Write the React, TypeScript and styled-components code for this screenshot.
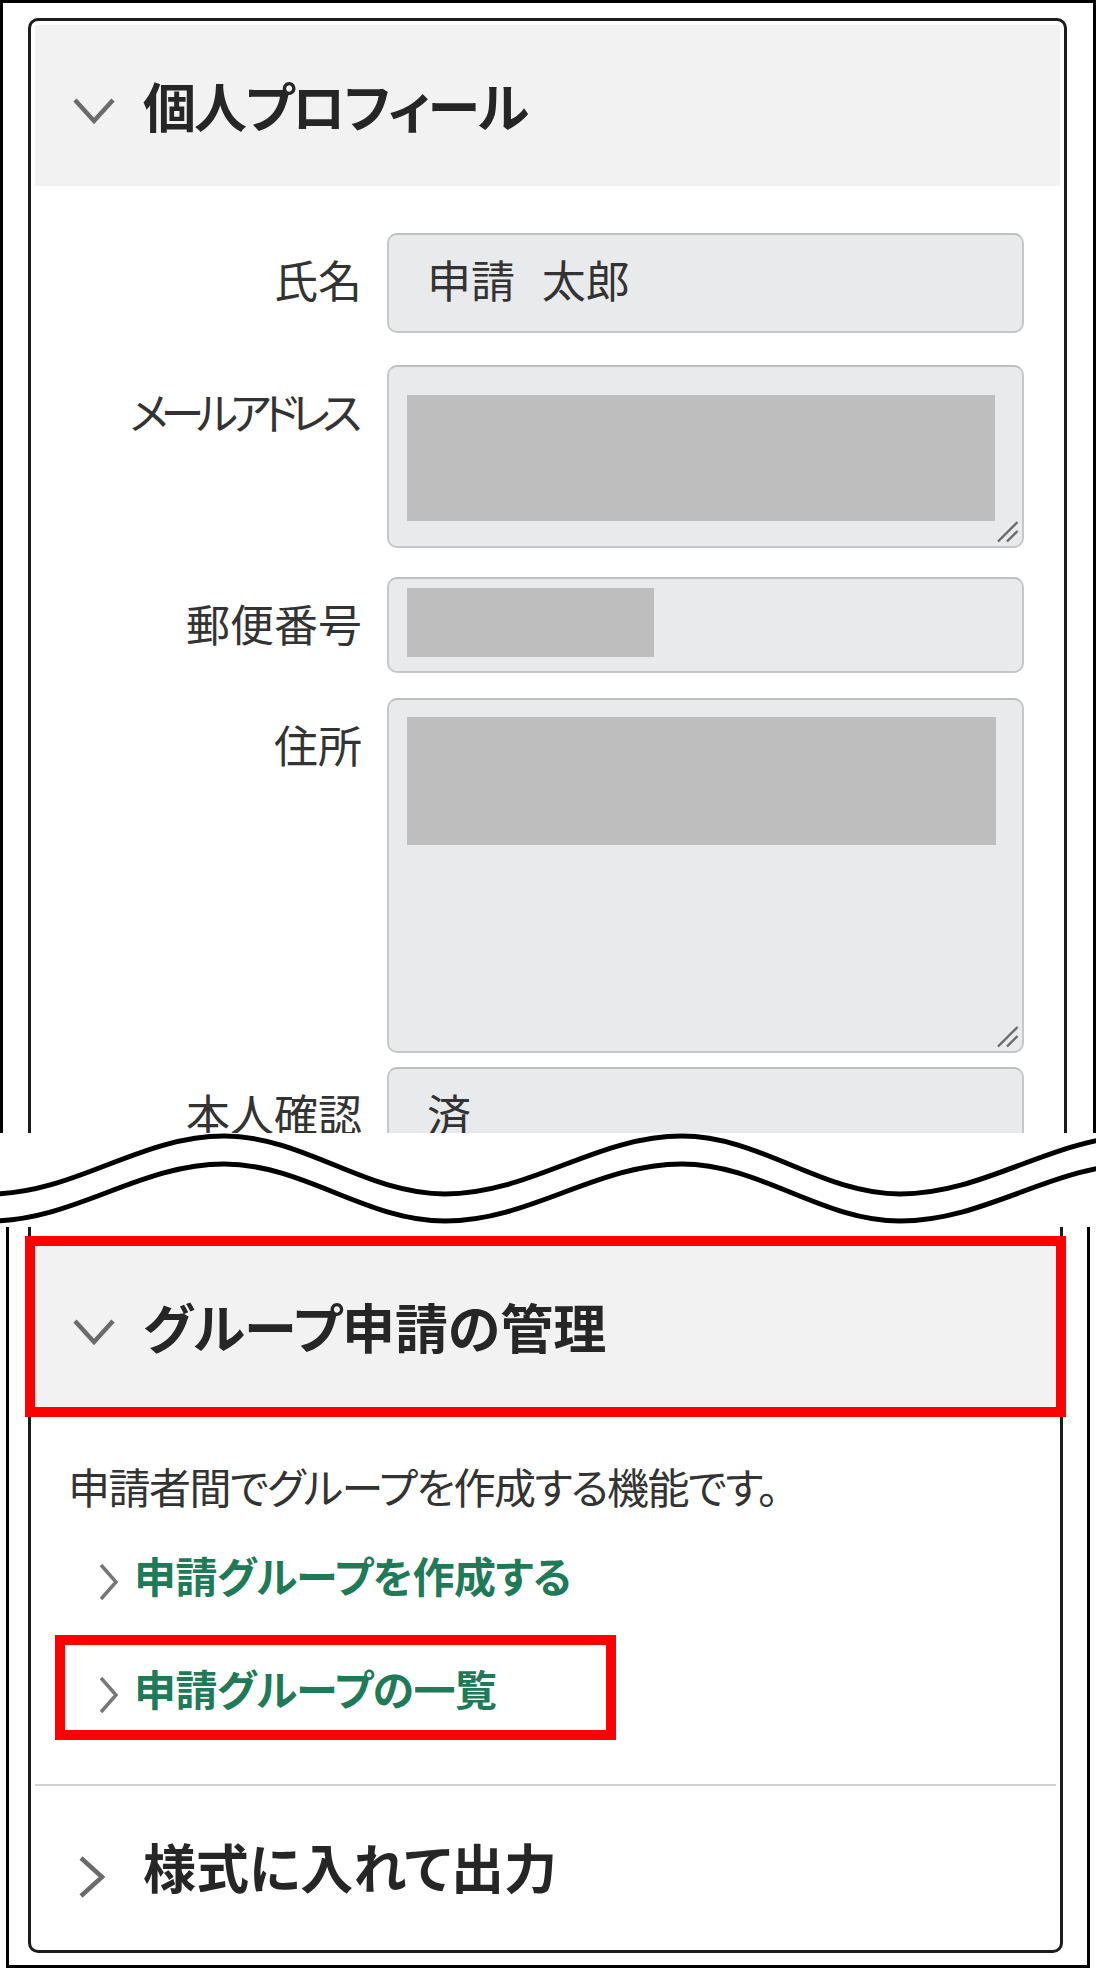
import React from 'react';
import styled, { createGlobalStyle } from 'styled-components';

const GlobalStyle = createGlobalStyle`
  html, body {
    margin: 0;
    padding: 0;
    background: #fff;
  }
  body {
    font-family: "Noto Sans CJK JP", "Noto Sans", sans-serif;
    color: #333;
  }
`;

type FieldDef = {
  label: string;
  tracking?: number;
  gap: number;
  height: number;
  value?: string;
  redact?: { w: number; h: number; top: number };
  grip?: boolean;
};

const fields: FieldDef[] = [
  { label: '氏名', gap: 0, height: 100, value: '申請 太郎' },
  { label: 'メールアドレス', tracking: -7.5, gap: 32, height: 183, redact: { w: 588, h: 126, top: 28 }, grip: true },
  { label: '郵便番号', gap: 29, height: 96, redact: { w: 247, h: 69, top: 9 } },
  { label: '住所', gap: 25, height: 355, redact: { w: 589, h: 128, top: 17 }, grip: true },
  { label: '本人確認', gap: 14, height: 100, value: '済' },
];

function Chevron({ dir }: { dir: 'down' | 'right' }) {
  if (dir === 'down') {
    return (
      <ChevronSvg viewBox="0 0 44 44" $shift={7}>
        <path d="M3 13 L22 34 L41 13" />
      </ChevronSvg>
    );
  }
  return (
    <ChevronSvg viewBox="0 0 44 44" $shift={22}>
      <path d="M9 3 L30 22 L9 41" />
    </ChevronSvg>
  );
}

function WaveBreak() {
  // two parallel wavy cut lines
  const wave = (peak: number, trough: number) => {
    const xs = [-10, 224, 445, 682, 900, 1140];
    let d = `M${xs[0]} ${trough}`;
    for (let i = 1; i < xs.length; i++) {
      const x0 = xs[i - 1];
      const x1 = xs[i];
      const y0 = i % 2 === 1 ? trough : peak;
      const y1 = i % 2 === 1 ? peak : trough;
      const k = (x1 - x0) * 0.36;
      d += ` C${x0 + k} ${y0} ${x1 - k} ${y1} ${x1} ${y1}`;
    }
    return d;
  };
  return (
    <Wave viewBox="0 0 1096 94" width={1096} height={94}>
      <path d={wave(3, 61)} />
      <path d={wave(31, 88)} />
    </Wave>
  );
}

export default function App() {
  return (
    <Page>
      <GlobalStyle />
      <TopFrame>
        <Card>
          <SectionHeader $open>
            <Chevron dir="down" />
            <SectionTitle $tracking={-2}>個人プロフィール</SectionTitle>
          </SectionHeader>
          <Form>
            {fields.map((f) => (
              <Field key={f.label} $gap={f.gap}>
                <FieldLabel $tracking={f.tracking ?? 0}>{f.label}</FieldLabel>
                <FieldBox $h={f.height}>
                  {f.value && <FieldValue>{f.value}</FieldValue>}
                  {f.redact && <Redacted $w={f.redact.w} $h={f.redact.h} $top={f.redact.top} />}
                  {f.grip && (
                    <Grip viewBox="0 0 16 16">
                      <path d="M15 2 L2 15 M15 8 L8 15" />
                    </Grip>
                  )}
                </FieldBox>
              </Field>
            ))}
          </Form>
        </Card>
      </TopFrame>

      <WaveBreak />

      <BottomFrame>
        <Card $cutTop>
          <SectionHeader $open $highlight>
            <Chevron dir="down" />
            <SectionTitle>グループ申請の管理</SectionTitle>
          </SectionHeader>
          <SectionBody>
            <Description>申請者間でグループを作成する機能です。</Description>
            <LinkList>
              <LinkItem>
                <LinkArrow viewBox="0 0 24 40">
                  <path d="M4 3 L19 20 L4 37" />
                </LinkArrow>
                <LinkText>申請グループを作成する</LinkText>
              </LinkItem>
              <LinkItem $highlight>
                <LinkArrow viewBox="0 0 24 40">
                  <path d="M4 3 L19 20 L4 37" />
                </LinkArrow>
                <LinkText>申請グループの一覧</LinkText>
              </LinkItem>
            </LinkList>
          </SectionBody>
          <Divider />
          <SectionHeader>
            <Chevron dir="right" />
            <SectionTitle>様式に入れて出力</SectionTitle>
          </SectionHeader>
        </Card>
      </BottomFrame>
    </Page>
  );
}

const Page = styled.div`
  width: 1096px;
  background: #fff;
`;

const TopFrame = styled.div`
  height: 1133px;
  box-sizing: border-box;
  border: 3px solid #000;
  border-bottom: none;
  padding: 15px 26px 0 25px;
  overflow: hidden;
`;

const BottomFrame = styled.div`
  width: 1084px;
  margin-left: 6px;
  box-sizing: border-box;
  border: 3px solid #000;
  border-top: none;
  padding: 0 24px 12px 19px;
`;

const Card = styled.div<{ $cutTop?: boolean }>`
  border: 3px solid #1c1c1c;
  border-radius: 10px;
  padding: 4px;
  background: #fff;

  ${(p) =>
    p.$cutTop &&
    `
    border-top: none;
    border-top-left-radius: 0;
    border-top-right-radius: 0;
    padding-top: 19px;
  `}
`;

const SectionHeader = styled.div<{ $open?: boolean; $highlight?: boolean }>`
  display: flex;
  align-items: center;
  gap: 27px;
  height: ${(p) => (p.$open ? 161 : 160)}px;
  padding-left: 37px;
  background: ${(p) => (p.$open ? '#f2f2f2' : '#fff')};
  outline: ${(p) => (p.$highlight ? '10px solid #ff0000' : 'none')};
`;

const ChevronSvg = styled.svg<{ $shift: number }>`
  width: 44px;
  height: 44px;
  flex: none;
  margin-top: ${(p) => p.$shift}px;
  fill: none;
  stroke: #6b6b6b;
  stroke-width: 4.5;
`;

const SectionTitle = styled.h2<{ $tracking?: number }>`
  margin: 0;
  font-size: 53px;
  line-height: 1;
  font-weight: 700;
  color: #262626;
  letter-spacing: ${(p) => p.$tracking ?? 0}px;
  font-feature-settings: "palt";
`;

const Form = styled.div`
  display: flex;
  flex-direction: column;
  padding-top: 47px;
`;

const Field = styled.div<{ $gap: number }>`
  display: grid;
  grid-template-columns: 327px 637px;
  column-gap: 25px;
  margin-top: ${(p) => p.$gap}px;
`;

const FieldLabel = styled.div<{ $tracking: number }>`
  text-align: right;
  font-size: 44px;
  line-height: 60px;
  padding-top: 16px;
  padding-right: ${(p) => -p.$tracking}px;
  letter-spacing: ${(p) => p.$tracking}px;
  color: #333;
  font-feature-settings: "palt";
  white-space: nowrap;
`;

const FieldBox = styled.div<{ $h: number }>`
  position: relative;
  height: ${(p) => p.$h}px;
  box-sizing: border-box;
  background: #e9eaec;
  border: 2px solid #c6c7ca;
  border-top-color: #bdbec1;
  border-radius: 10px;
  padding-left: 18px;
`;

const FieldValue = styled.div`
  font-size: 44px;
  line-height: 60px;
  padding: 14px 0 0 20px;
  word-spacing: 17px;
  color: #333;
  font-feature-settings: "palt";
`;

const Redacted = styled.div<{ $w: number; $h: number; $top: number }>`
  width: ${(p) => p.$w}px;
  height: ${(p) => p.$h}px;
  margin-top: ${(p) => p.$top}px;
  background: #bebebe;
`;

const Grip = styled.svg`
  position: absolute;
  right: 3px;
  bottom: 3px;
  width: 24px;
  height: 24px;
  fill: none;
  stroke: #6a6a6a;
  stroke-width: 1.6;
`;

const Wave = styled.svg`
  display: block;
  fill: none;
  stroke: #000;
  stroke-width: 5;
`;

const SectionBody = styled.div`
  padding: 49px 0 54px 30px;
`;

const Description = styled.p`
  margin: 0;
  padding-left: 3px;
  font-size: 42px;
  line-height: 60px;
  letter-spacing: -1.5px;
  color: #333;
  font-feature-settings: "palt";
`;

const LinkList = styled.div`
  display: flex;
  flex-direction: column;
  gap: 28px;
  margin-top: 16px;
`;

const LinkItem = styled.div<{ $highlight?: boolean }>`
  display: flex;
  align-items: center;
  gap: 13px;
  width: 541px;
  height: 85px;
  box-sizing: border-box;
  padding-left: 32px;
  outline: ${(p) => (p.$highlight ? '10px solid #ff0000' : 'none')};
`;

const LinkArrow = styled.svg`
  width: 24px;
  height: 40px;
  flex: none;
  margin-top: 15px;
  fill: none;
  stroke: #777;
  stroke-width: 3.5;
`;

const LinkText = styled.span`
  font-size: 42px;
  line-height: 60px;
  font-weight: 700;
  letter-spacing: -0.5px;
  color: #1f7a58;
  font-feature-settings: "palt";
`;

const Divider = styled.div`
  height: 2px;
  background: #d2d2d2;
`;
